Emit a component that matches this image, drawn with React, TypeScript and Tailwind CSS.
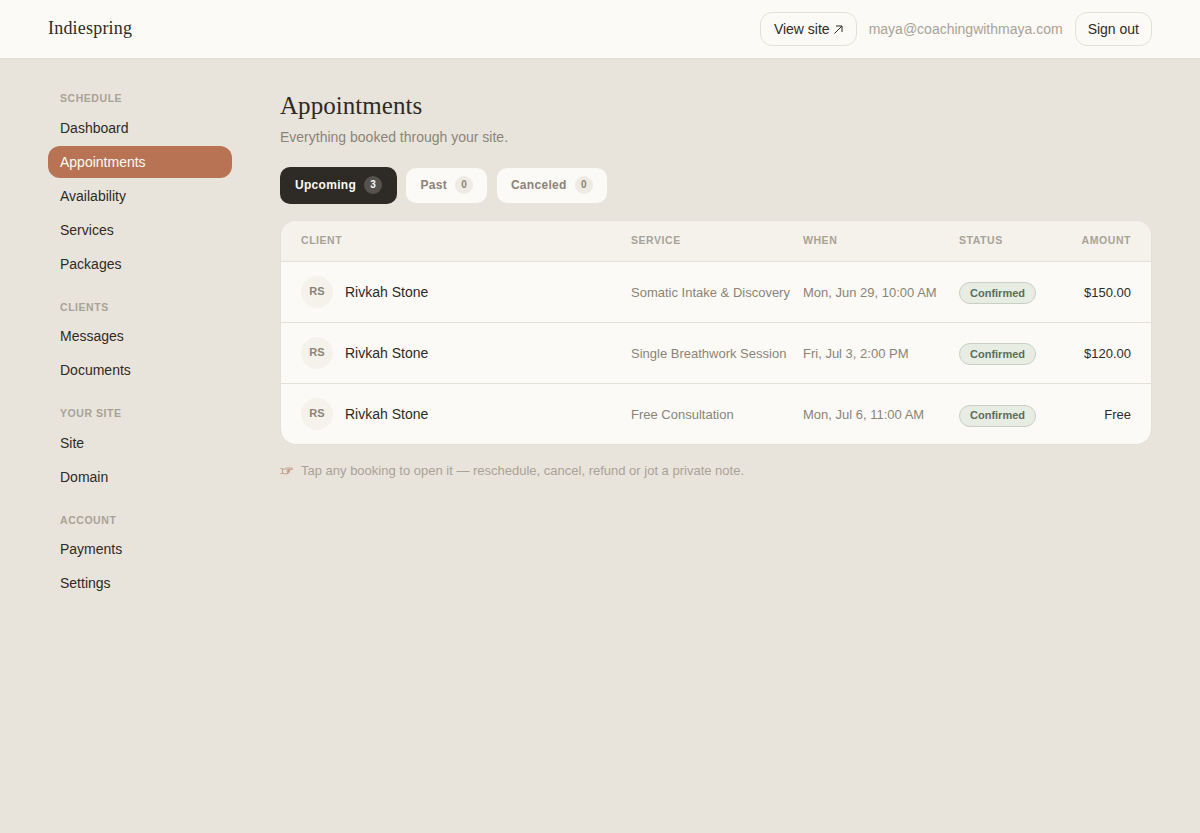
const serif = "font-['Liberation_Serif',serif]";

const navGroups = [
  { label: "SCHEDULE", items: ["Dashboard", "Appointments", "Availability", "Services", "Packages"] },
  { label: "CLIENTS", items: ["Messages", "Documents"] },
  { label: "YOUR SITE", items: ["Site", "Domain"] },
  { label: "ACCOUNT", items: ["Payments", "Settings"] },
];

const rows = [
  { service: "Somatic Intake & Discovery", when: "Mon, Jun 29, 10:00 AM", amount: "$150.00" },
  { service: "Single Breathwork Session", when: "Fri, Jul 3, 2:00 PM", amount: "$120.00" },
  { service: "Free Consultation", when: "Mon, Jul 6, 11:00 AM", amount: "Free" },
];

function Sidebar() {
  return (
    <aside className="w-[184px] shrink-0 pt-[1px]">
      {navGroups.map((group, i) => (
        <div key={group.label} className={i === 0 ? "" : "mt-[21px]"}>
          <div className="px-3 pb-[6.5px] text-[10.5px] leading-[13px] font-bold tracking-[0.55px] text-[#a8a297]">
            {group.label}
          </div>
          <div className="flex flex-col gap-[2px]">
            {group.items.map((item) => (
              <a
                key={item}
                className={
                  item === "Appointments"
                    ? "rounded-xl bg-[#b87355] px-3 h-8 flex items-center text-sm text-[#fbfaf6]"
                    : "rounded-xl px-3 h-8 flex items-center text-sm text-[#2e2a25]"
                }
              >
                {item}
              </a>
            ))}
          </div>
        </div>
      ))}
    </aside>
  );
}

function Tab({ label, count, active }: { label: string; count: number; active?: boolean }) {
  return (
    <button
      className={
        active
          ? "flex items-center gap-2 h-[37px] rounded-[10px] bg-[#2e2a25] px-[15px] pb-[1px] text-xs font-bold tracking-[0.3px] text-[#fbfaf6]"
          : "flex items-center gap-2 h-[35px] rounded-[10px] bg-[#fbfaf6] px-[14.3px] pb-[1px] text-xs font-bold tracking-[0.3px] text-[#8a8478]"
      }
    >
      {label}
      <span
        className={
          active
            ? "flex size-[18px] items-center justify-center rounded-full bg-[#56524d] text-[10px] tracking-normal text-[#fbfaf6]"
            : "flex size-[18px] items-center justify-center rounded-full bg-[#eeebe5] text-[10px] font-bold tracking-normal text-[#8a8478]"
        }
      >
        {count}
      </span>
    </button>
  );
}

function PointingHand() {
  return (
    <svg width="13" height="8" viewBox="0 0 13 8" fill="none" stroke="#c08f78" strokeWidth="0.8" className="shrink-0">
      <path d="M0.4 1.6 H2.4 V6.6 H0.4" />
      <path d="M2.4 2.2 H4.6 L6.4 1 H12 C12.9 1 12.9 2.4 12 2.4 H8" />
      <path d="M6.2 2.4 L8 3.2 V4.2 H6.4" />
      <path d="M8 3.2 H9.4 C10 3.2 10 4.4 9.4 4.4 H8" />
      <path d="M8 4.4 H9 C9.6 4.4 9.6 5.6 9 5.6 H7" />
      <path d="M7.6 5.6 C8.2 5.6 8.2 6.8 7.6 6.8 H4.4 L2.4 6" />
    </svg>
  );
}

export default function App() {
  return (
    <div className="min-h-[833px] bg-[#e8e4dc] font-['Liberation_Sans',sans-serif] text-[#2e2a25]">
      <header className="flex h-[59px] items-center justify-between border-b border-[#e0dcd3] bg-[#fbfaf6] px-12">
        <div className={`${serif} pb-[2px] text-[18px] tracking-[0.2px] text-[#2e2a25]`}>Indiespring</div>
        <div className="flex items-center gap-3">
          <a className="flex h-[34px] items-center gap-[4px] rounded-xl border border-[#e4e0d8] px-[13px] text-sm">
            View site
            <svg width="9" height="9" viewBox="0 0 9 9" fill="none" stroke="currentColor" strokeWidth="1">
              <path d="M0.5 8.5 L8 1 M2 1 H8 V7" />
            </svg>
          </a>
          <span className="text-sm text-[#a8a297]">maya@coachingwithmaya.com</span>
          <a className="flex h-[34px] items-center rounded-xl border border-[#e4e0d8] px-3 text-sm">Sign out</a>
        </div>
      </header>

      <div className="flex gap-12 px-12 pt-8">
        <Sidebar />
        <main className="flex-1">
          <h1 className={`${serif} text-[25px] leading-[30px] tracking-[0.05px]`}>Appointments</h1>
          <p className="mt-[6px] text-sm text-[#8a8478]">Everything booked through your site.</p>

          <div className="mt-5 flex items-center gap-[9.2px]">
            <Tab label="Upcoming" count={3} active />
            <Tab label="Past" count={0} />
            <Tab label="Canceled" count={0} />
          </div>

          <div className="mt-4 overflow-hidden rounded-2xl border border-[#e4e0d8] bg-[#fbfaf6]">
            <table className="w-full table-fixed border-collapse">
              <thead>
                <tr className="h-10 bg-[#f5f2ec] text-left text-[10.5px] font-bold tracking-[0.55px] text-[#a8a297]">
                  <th className="w-[350px] pl-5 font-bold">CLIENT</th>
                  <th className="w-[172px] font-bold">SERVICE</th>
                  <th className="w-[156px] font-bold">WHEN</th>
                  <th className="w-[100px] font-bold">STATUS</th>
                  <th className="pr-5 text-right font-bold">AMOUNT</th>
                </tr>
              </thead>
              <tbody>
                {rows.map((row) => (
                  <tr key={row.service} className="h-[61px] border-t border-[#e4e0d8]">
                    <td className="pl-5">
                      <div className="flex items-center gap-3">
                        <span className="flex size-8 items-center justify-center rounded-full bg-[#f5f2ec] pb-[1px] text-[11px] font-bold text-[#8a8478]">
                          RS
                        </span>
                        <span className="text-sm">Rivkah Stone</span>
                      </div>
                    </td>
                    <td className="pt-[2px] text-[13px] whitespace-nowrap text-[#8a8478]">{row.service}</td>
                    <td className="pt-[2px] text-[13px] whitespace-nowrap text-[#8a8478]">{row.when}</td>
                    <td className="pt-[1.5px]">
                      <span className="inline-flex h-[22px] items-center rounded-full border border-[#c9cfc3] bg-[#e8ede4] px-[10px] text-[11px] font-bold text-[#5c6e58]">
                        Confirmed
                      </span>
                    </td>
                    <td className="pt-[2px] pr-5 text-right text-[13px]">{row.amount}</td>
                  </tr>
                ))}
              </tbody>
            </table>
          </div>

          <p className="mt-4 flex items-center gap-2 text-[13px] text-[#a8a297]">
            <PointingHand />
            Tap any booking to open it — reschedule, cancel, refund or jot a private note.
          </p>
        </main>
      </div>
    </div>
  );
}
